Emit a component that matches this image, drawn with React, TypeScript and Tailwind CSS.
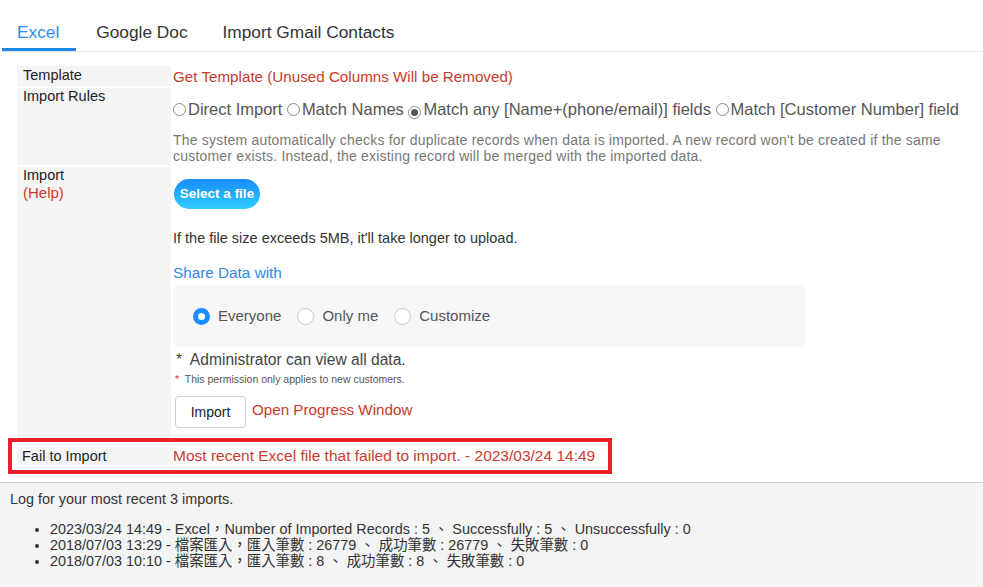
import React from "react";

const font = { fontFamily: '"Liberation Sans", Arial, "Noto Sans CJK TC", sans-serif' };

function SmallRadio({ checked = false }: { checked?: boolean }) {
  return (
    <span className="mr-[2px] inline-flex h-[13px] w-[13px] items-center justify-center rounded-full border border-[#8a8a8a] bg-white align-[-1px]">
      {checked && <span className="h-[7px] w-[7px] rounded-full bg-[#555]" />}
    </span>
  );
}

function ShareRadio({ label, checked = false }: { label: string; checked?: boolean }) {
  return (
    <label className="flex items-center gap-[8px] text-[15px] text-[#555]">
      {checked ? (
        <span className="flex h-[17px] w-[17px] items-center justify-center rounded-full bg-[#1a8cff]">
          <span className="h-[7px] w-[7px] rounded-full bg-white" />
        </span>
      ) : (
        <span className="h-[17px] w-[17px] rounded-full border border-[#c8c8c8] bg-white" />
      )}
      {label}
    </label>
  );
}

function Row({ label, children }: { label: React.ReactNode; children: React.ReactNode }) {
  return (
    <div className="flex gap-[2px]">
      <div className="w-[154px] shrink-0 bg-[#f5f5f5] px-[6px] text-[14.5px] leading-[16px] text-[#222]">{label}</div>
      <div className="flex-1">{children}</div>
    </div>
  );
}

export default function App() {
  return (
    <div style={font} className="flex h-[587px] w-[983px] flex-col overflow-hidden bg-white">
      {/* tabs */}
      <div className="mt-[19px] flex border-b border-[#e8e8e8] pl-[2px] text-[17.3px] leading-[22px]">
        <div className="border-b-[3px] border-[#1e88e5] pb-[5px] pl-[15px] pr-[17px] pt-[2px] text-[#2e8bec]">Excel</div>
        <div className="ml-[20px] pb-[5px] pt-[2px] text-[#333]">Google Doc</div>
        <div className="ml-[35px] pb-[5px] pt-[2px] text-[#333]">Import Gmail Contacts</div>
      </div>

      <div className="mt-[14px] flex flex-col gap-[2px] pl-[17px]">
        <Row label={<div className="pb-[2px] pt-[1px]">Template</div>}>
          <div className="pt-[2px] text-[15.2px] leading-[18px] text-[#cc3a2c]">Get Template (Unused Columns Will be Removed)</div>
        </Row>
        <Row label={<div className="pt-[0px]">Import Rules</div>}>
          <div className="pb-[1px]">
            <div className="mt-[11px] whitespace-nowrap text-[16.5px] leading-[20px] text-[#555]">
              <SmallRadio />Direct Import <SmallRadio />Match Names <SmallRadio checked />Match any [Name+(phone/email)] fields{" "}
              <SmallRadio />Match [Customer Number] field
            </div>
            <div className="mt-[13px] pr-[20px] text-[14px] leading-[16px] tracking-[0.2px] text-[#777]">
              The system automatically checks for duplicate records when data is imported. A new record won't be created if the same customer exists. Instead, the existing record will be merged with the imported data.
            </div>
          </div>
        </Row>
        <Row
          label={
            <div className="pt-[0px]">
              <div>Import</div>
              <div className="text-[15px] leading-[19px] text-[#cc3a2c]">(Help)</div>
            </div>
          }
        >
          <div className="pb-[10px]">
            <button className="ml-[1px] mt-[12px] h-[30px] w-[86px] rounded-full bg-gradient-to-b from-[#1a8cff] to-[#33ccff] text-[13.5px] font-bold text-white">
              Select a file
            </button>
            <div className="mt-[20px] text-[14.5px] leading-[18px] text-[#333]">If the file size exceeds 5MB, it'll take longer to upload.</div>
            <div className="mt-[17px] text-[15.3px] leading-[18px] text-[#2e8bec]">Share Data with</div>
            <div className="mt-[3px] flex h-[62px] w-[632px] items-center gap-[16px] rounded-[5px] bg-[#f7f7f7] pl-[20px]">
              <ShareRadio label="Everyone" checked />
              <ShareRadio label="Only me" />
              <ShareRadio label="Customize" />
            </div>
            <div className="mt-[4px] pl-[3px] text-[15.6px] leading-[18px] text-[#444]">*&nbsp; Administrator can view all data.</div>
            <div className="mt-[4px] pl-[2px] text-[10.5px] leading-[12px] text-[#555]">
              <span className="text-[#cc3a2c]">*</span>&nbsp; This permission only applies to new customers.
            </div>
            <div className="mt-[11px] flex items-center gap-[6px]">
              <button className="ml-[2px] h-[32px] w-[71px] rounded-[4px] border border-[#d0d0d0] bg-white text-[14px] text-[#222]">Import</button>
              <span className="-mt-[4px] text-[15.2px] text-[#cc3a2c]">Open Progress Window</span>
            </div>
          </div>
        </Row>
      </div>

      <div className="ml-[8px] w-[604px] border-[4px] border-[#e8222a] py-[5px] pl-[5px]">
        <div className="flex gap-[2px]">
          <div className="w-[154px] shrink-0 bg-[#f5f5f5] px-[5px] text-[14.5px] leading-[18px] text-[#222]">Fail to Import</div>
          <div className="text-[15.5px] leading-[18px] text-[#cc3a2c]">Most recent Excel file that failed to import. - 2023/03/24 14:49</div>
        </div>
      </div>

      <div className="mt-[8px] flex-1 border-t border-[#d0d0d0] bg-[#f4f4f4] px-[10px] pt-[8px] text-[14.4px] text-[#333]">
        <div className="leading-[17px]">Log for your most recent 3 imports.</div>
        <ul className="mt-[13px] list-disc pl-[40px] leading-[16px]">
          <li>2023/03/24 14:49 - Excel，Number of Imported Records : 5 、 Successfully : 5 、 Unsuccessfully : 0</li>
          <li>2018/07/03 13:29 - 檔案匯入，匯入筆數 : 26779 、 成功筆數 : 26779 、 失敗筆數 : 0</li>
          <li>2018/07/03 10:10 - 檔案匯入，匯入筆數 : 8 、 成功筆數 : 8 、 失敗筆數 : 0</li>
        </ul>
      </div>
    </div>
  );
}
